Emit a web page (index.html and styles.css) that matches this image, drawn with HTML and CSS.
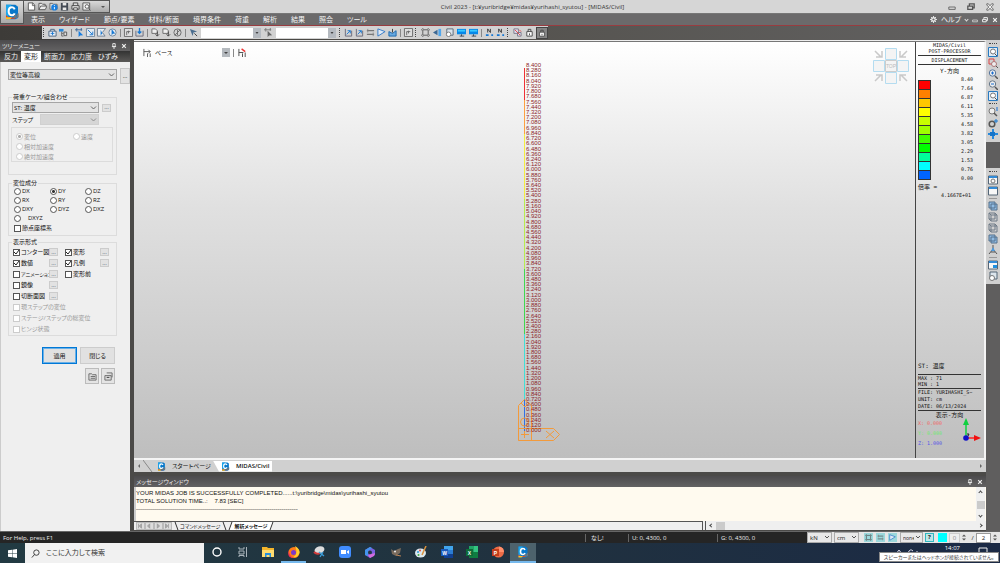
FILE: index.html
```html
<!DOCTYPE html>
<html lang="ja">
<head>
<meta charset="utf-8">
<title>Civil 2023</title>
<link rel="stylesheet" href="styles.css">
</head>
<body>
<svg class="defs" aria-hidden="true">
  <symbol id="new" viewBox="0 0 10 10"><path d="M1.500 1h5l2 2.500V9h-7z" fill="#fff" stroke="#555"/><path d="M6 1v3h3" fill="none" stroke="#666"/></symbol>
  <symbol id="open" viewBox="0 0 10 10"><path d="M1 8.500v-7h3l1 1h3v2M1 8.500l2-4h7l-2 4z" fill="#ececec" stroke="#555"/></symbol>
  <symbol id="info" viewBox="0 0 10 10"><path d="M1 8V1.500h3l1 1h4V8z" fill="#ddd" stroke="#666"/><circle cx="6" cy="6" r="3.500" fill="#187fe0"/><path d="M6 5.500V8M6 3.500v1" stroke="#fff"/></symbol>
  <symbol id="save" viewBox="0 0 10 10"><path d="M1 1h8v8.500H1z" fill="#444b55"/><path d="M3 1h4v3H3zM3 6h4v3H3z" fill="#e8e8e8"/></symbol>
  <symbol id="print" viewBox="0 0 10 10"><path d="M2.500 4V1h5v3M1 4h8v4H1z" fill="#ddd" stroke="#444"/><path d="M3 6.500h4V9H3z" fill="#fff" stroke="#444"/></symbol>
  <symbol id="preview" viewBox="0 0 10 10"><path d="M1 1h7.500v8H1z" fill="#eee" stroke="#555"/><circle cx="5.500" cy="5" r="2" fill="#fff" stroke="#555"/><path d="M7 7l2.500 2.500" stroke="#555"/></symbol>
  <symbol id="logo" viewBox="0 0 24 24"><path d="M3 1h14l4 3v17l-4 2H3z" fill="#0878ca"/><path d="M3 1h8L6 21H3z" fill="#1ca6ec"/><path d="M3 17q5 6 14 2v3H3z" fill="#e6401c"/><path d="M3 20h9l-3 3H3z" fill="#ffc31e"/><path d="M16 8q-1-3-4-3-5 0-5 6t5 6q3 0 4-3" fill="none" stroke="#fff" stroke-width="3"/><path d="M14 21l1-4 3-1 1 5zM19 21v-6l3-1v6z" fill="#6d777d"/></symbol>
  <symbol id="box" viewBox="0 0 10 10"><path d="M1 3.500h8V9H1zM3 3.500v-2h4v2" fill="#e8eef5" stroke="#49627d"/><path d="M3 6h4M5 4v4" stroke="#1778d2"/></symbol>
  <symbol id="tree" viewBox="0 0 10 10"><path d="M0 1h5v3H0z" fill="#2588de"/><path d="M3 4v5h2M3 6h2" fill="none" stroke="#666"/><path d="M5.500 4.500h3v4h-3z" fill="#ddd" stroke="#555"/></symbol>
  <symbol id="pick" viewBox="0 0 10 10"><path d="M0 2h8M2 0v4M7 0v3" stroke="#3b6594"/><path d="M4 3v7l1.700-1.700L9 8z" fill="#187ee0"/></symbol>
  <symbol id="pickgray" viewBox="0 0 10 10"><path d="M0 2h8M2 0v4M7 0v3" stroke="#777"/><path d="M4 3v7l1.700-1.700L9 8z" fill="#666"/></symbol>
  <symbol id="frame" viewBox="0 0 10 10"><path d="M.5.5h9v9h-9z" fill="#e2eaf1" stroke="#6f859b"/><path d="M2 2l5 5M7.500 4v3.500H4" fill="none" stroke="#1474d0"/></symbol>
  <symbol id="poly" viewBox="0 0 10 10"><path d="M.5.500h9L6 5l3 4H.5z" fill="#e8edf2" stroke="#6a7c90"/><path d="M4 2v6l2-2z" fill="#1778d2"/></symbol>
  <symbol id="circ" viewBox="0 0 10 10"><circle cx="5" cy="5" r="4" fill="#e8edf2" stroke="#6a829b"/><path d="M4 1v7l1.500-1.500L8 6z" fill="#1778d2"/></symbol>
  <symbol id="sq" viewBox="0 0 10 10"><path d="M.5.500h9v9h-9z" fill="#ddd" stroke="#666"/><path d="M3 8V4h4M5 6V3" fill="none" stroke="#666"/></symbol>
  <symbol id="down" viewBox="0 0 10 10"><path d="M1 3v6h8V3" fill="none" stroke="#667"/><path d="M5 0v6M3 4l2 2 2-2" fill="none" stroke="#1778d2" stroke-width="1.500"/></symbol>
  <symbol id="shape" viewBox="0 0 10 10"><path d="M1 1h4l2 2v3H1z" fill="#eee" stroke="#666"/><path d="M7 4v5M5 7l2 2 2-2" fill="none" stroke="#444"/></symbol>
  <symbol id="no" viewBox="0 0 10 10"><circle cx="5" cy="5" r="4" fill="none" stroke="#666"/><path d="M2 8l6-6M5 2v6" stroke="#666"/></symbol>
  <symbol id="arrow" viewBox="0 0 10 10"><path d="M1 1l3 8 1-4 4-1z" fill="#4b6d8e"/><path d="M6 6l3 3" stroke="#333"/></symbol>
  <symbol id="dim" viewBox="0 0 10 10"><path d="M1 1v8M1 4h7M6 2l2 2-2 2M5 6v4M8 6v4" fill="none" stroke="#555"/></symbol>
  <symbol id="dimred" viewBox="0 0 10 10"><path d="M1 1v8M1 5h5M5 6v4M8 5v5" fill="none" stroke="#444"/><path d="M4 1l4 3" stroke="#e33" stroke-width="1.500"/></symbol>
  <symbol id="node" viewBox="0 0 10 10"><path d="M1.500 1v8h7V3" fill="none" stroke="#667"/><path d="M3 7l4-4M4 3h3v3" fill="none" stroke="#1778d2"/></symbol>
  <symbol id="beam" viewBox="0 0 10 10"><path d="M1 3h8M1 7h8" stroke="#555"/><path d="M2 1v4M8 5v4" stroke="#888"/></symbol>
  <symbol id="tri" viewBox="0 0 10 10"><path d="M1 1v8l8-5z" fill="#e0eaf5" stroke="#2e76c6"/></symbol>
  <symbol id="solid" viewBox="0 0 10 10"><path d="M1 4l4 2 4-3v6H1z" fill="#69a9df" stroke="#1765ab"/><path d="M5 1v4" stroke="#333"/></symbol>
  <symbol id="fit" viewBox="0 0 10 10"><path d="M2 2h6v6H2zM0 2h1M9 2h1M0 8h1M9 8h1M2 0v1M8 0v1M2 9v1M8 9v1" fill="none" stroke="#555"/></symbol>
  <symbol id="left" viewBox="0 0 10 10"><path d="M0 5l5-3v6z" fill="#3c6894"/><path d="M6 1h3v8H6z" fill="#51a7ec"/></symbol>
  <symbol id="copy" viewBox="0 0 10 10"><path d="M2 1h7v7H2z" fill="#dce5ec" stroke="#567"/><circle cx="4" cy="7" r="2.500" fill="#fff" stroke="#777"/></symbol>
  <symbol id="screen" viewBox="0 0 10 10"><path d="M0 1h10v6H0z" fill="#0788e8"/><path d="M1 2h8v2H1z" fill="#36c8ff"/><path d="M3 9h5M5 7v2" stroke="#345"/></symbol>
  <symbol id="nn" viewBox="0 0 10 10"><path d="M3 5V1l3 4V1" fill="none" stroke="#333"/><path d="M1 8h3M7 8h2" stroke="#1477d3" stroke-width="2"/></symbol>
  <symbol id="lock" viewBox="0 0 10 10"><path d="M2 4h6v5H2z" fill="#fff" stroke="#444"/><path d="M3.500 4V1.500h3V4M5 6v2" fill="none" stroke="#444"/></symbol>
  <symbol id="swap" viewBox="0 0 10 10"><path d="M1 1h5v5H1zM5 5h4v4H5z" fill="#dde" stroke="#778"/><path d="M2 2l6 6M7 2l2 2" stroke="#e34343"/></symbol>
  <symbol id="zfit" viewBox="0 0 10 10"><path d="M.5.500h9v9h-9z" fill="#e1edf7" stroke="#287ac1"/><circle cx="5" cy="4.500" r="2.500" fill="#fff" stroke="#777"/><path d="M7 7l2 2" stroke="#555"/></symbol>
  <symbol id="zwin" viewBox="0 0 10 10"><path d="M1 1h5v5H1z" fill="none" stroke="#d44"/><circle cx="6" cy="6" r="2.500" fill="#eee" stroke="#a77"/><path d="M8 8l2 2" stroke="#555"/></symbol>
  <symbol id="zin" viewBox="0 0 10 10"><circle cx="4.500" cy="4" r="3.200" fill="#eee" stroke="#58759a"/><path d="M7 7l3 3" stroke="#555" stroke-width="1.500"/><path d="M3 4h3M4.500 2.500v3" stroke="#176cd0"/></symbol>
  <symbol id="zout" viewBox="0 0 10 10"><circle cx="4.500" cy="4" r="3.200" fill="#eee" stroke="#678"/><path d="M7 7l3 3" stroke="#555" stroke-width="1.500"/><path d="M3 4h3" stroke="#176cd0"/></symbol>
  <symbol id="zdyn" viewBox="0 0 10 10"><circle cx="4" cy="4" r="3" fill="#eee" stroke="#777"/><path d="M6 6l3 3" stroke="#555" stroke-width="1.500"/><path d="M8 1h2M8 3h2" stroke="#176cd0"/></symbol>
  <symbol id="rot" viewBox="0 0 10 10"><circle cx="4" cy="6" r="2.800" fill="none" stroke="#555" stroke-width="1.500"/><path d="M6 3h4M8 1v4" stroke="#1778d2"/></symbol>
  <symbol id="pan" viewBox="0 0 10 10"><path d="M5 0v10M0 5h10" stroke="#2588dc" stroke-width="2"/><path d="M2 3h5v4H2z" fill="#1574c9"/></symbol>
  <symbol id="win" viewBox="0 0 10 10"><path d="M.5 1h9v8h-9z" fill="#f7f7f7" stroke="#567"/><path d="M1 2h8" stroke="#328bd8" stroke-width="2"/></symbol>
  <symbol id="wing" viewBox="0 0 10 10"><path d="M.5 1h9v8h-9z" fill="#f7f7f7" stroke="#567"/><path d="M1 2h8" stroke="#328bd8" stroke-width="2"/><circle cx="5" cy="6" r="2" fill="none" stroke="#777"/></symbol>
  <symbol id="winb" viewBox="0 0 10 10"><path d="M.5 1h9v8h-9z" fill="#f7f7f7" stroke="#567"/><path d="M1 2h8" stroke="#328bd8" stroke-width="2"/><path d="M5 5h4v3H5z" fill="#1f8fe0"/></symbol>
  <symbol id="cube" viewBox="0 0 10 10"><path d="M1 1h6v6H1zM3 3h6v6H3z" fill="#8fbbe3" stroke="#55708c"/></symbol>
  <symbol id="cubew" viewBox="0 0 10 10"><path d="M1 1h6v6H1zM3 3h6v6H3zM1 1l2 2M7 1l2 2M1 7l2 2" fill="none" stroke="#6e7a87"/></symbol>
  <symbol id="persp" viewBox="0 0 10 10"><path d="M5 0v4L1 9M5 4l4 5M3 7h4" fill="none" stroke="#555"/><path d="M5 2L3 6h4z" fill="#4c9ae0"/></symbol>
  <symbol id="gear" viewBox="0 0 10 10"><circle cx="5" cy="5" r="2.500" fill="none" stroke="#eee" stroke-width="1.800"/><path d="M5 0v2M5 8v2M0 5h2M8 5h2M1.500 1.500L3 3M7 7l1.500 1.500M8.500 1.500L7 3M3 7L1.500 8.500" stroke="#eee" stroke-width="1.300"/></symbol>
  <symbol id="min" viewBox="0 0 10 10"><path d="M1 5h8v3H1z" fill="none" stroke="currentColor"/></symbol>
  <symbol id="restore" viewBox="0 0 10 10"><path d="M3 3V1h6v5H7M1 4h6v4H1z" fill="none" stroke="currentColor" stroke-width="1.600"/></symbol>
  <symbol id="x" viewBox="0 0 10 10"><path d="M2 2l6 6M8 2L2 8" stroke="currentColor" stroke-width="2"/></symbol>
  <symbol id="xbox" viewBox="0 0 10 10"><path d="M1 1h2l2 2.500L7 1h2v1.500L6.500 5 9 7.500V9H7L5 6.500 3 9H1V7.500L3.500 5 1 2.500z" fill="#eee" stroke="currentColor"/></symbol>
  <symbol id="pin" viewBox="0 0 10 10"><path d="M3 1h4v5H3zM1.500 6h7M5 6v4" fill="none" stroke="currentColor" stroke-width="1.500"/></symbol>
  <symbol id="doc" viewBox="0 0 10 10"><path d="M1 2h3l1 1h4v6H1zM3 5h5M3 7h5" fill="#ddd" stroke="#666"/></symbol>
  <symbol id="stack" viewBox="0 0 10 10"><path d="M3 1h6v5M1 4h7v5H1z" fill="#ddd" stroke="#666"/><path d="M3 6h3" stroke="#333"/></symbol>
</svg>

<header>
  <div class="titlebar">
    <div class="quick">
      <button aria-label="新規"><svg><use href="#new"/></svg></button>
      <button aria-label="開く"><svg><use href="#open"/></svg></button>
      <button aria-label="情報"><svg><use href="#info"/></svg></button>
      <button aria-label="保存"><svg><use href="#save"/></svg></button>
      <button aria-label="印刷"><svg><use href="#print"/></svg></button>
      <button aria-label="プレビュー"><svg><use href="#preview"/></svg></button>
      <span class="quick-more"></span>
    </div>
    <h1>Civil 2023 - [t:¥yuribridge¥midas¥yurihashi_syutou] - [MIDAS/Civil]</h1>
    <div class="window-buttons">
      <button aria-label="最小化"><svg><use href="#min"/></svg></button>
      <button aria-label="元に戻す"><svg><use href="#restore"/></svg></button>
      <button aria-label="閉じる"><svg><use href="#xbox"/></svg></button>
    </div>
    <button class="app-logo" aria-label="メイン"><svg><use href="#logo"/></svg></button>
  </div>
  <nav class="menubar">
    <button>表示</button><button>ウィザード</button><button>節点/要素</button><button>材料/断面</button><button>境界条件</button><button>荷重</button><button>解析</button><button>結果</button><button>照会</button><button>ツール</button>
    <div class="menu-right">
      <svg><use href="#gear"/></svg><button>ヘルプ</button><i class="chev"></i>
      <button class="mdi" aria-label="最小化"><svg><use href="#min"/></svg></button>
      <button class="mdi" aria-label="元に戻す"><svg><use href="#restore"/></svg></button>
      <button class="mdi" aria-label="閉じる"><svg><use href="#x"/></svg></button>
    </div>
  </nav>
  <div class="toolrow">
    <div class="toolbar">
      <i class="grip"></i>
      <svg><use href="#box"/></svg><svg><use href="#tree"/></svg><i class="sep"></i>
      <svg><use href="#pick"/></svg><svg><use href="#frame"/></svg><svg><use href="#poly"/></svg><svg><use href="#circ"/></svg><i class="sep"></i>
      <svg><use href="#sq"/></svg><svg><use href="#down"/></svg><i class="sep"></i>
      <svg><use href="#shape"/></svg><svg><use href="#shape"/></svg><svg><use href="#no"/></svg><i class="sep"></i>
      <svg><use href="#arrow"/></svg>
      <select class="bar-select" aria-label="節点選択"><option></option></select>
      <svg><use href="#pickgray"/></svg>
      <select class="bar-select" aria-label="要素選択"><option></option></select>
      <i class="grip"></i>
      <svg><use href="#node"/></svg><svg><use href="#node"/></svg><svg><use href="#beam"/></svg><svg><use href="#tri"/></svg><svg><use href="#solid"/></svg><i class="sep"></i><svg><use href="#sq"/></svg>
      <i class="grip"></i>
      <div class="tool-group"><svg><use href="#fit"/></svg><svg><use href="#left"/></svg><svg><use href="#copy"/></svg><svg><use href="#screen"/></svg><svg><use href="#screen"/></svg></div><i class="sep"></i>
      <svg><use href="#nn"/></svg><svg><use href="#nn"/></svg>
      <i class="grip"></i>
      <div class="tool-group"><svg><use href="#swap"/></svg><svg><use href="#lock"/></svg><svg class="pressed"><use href="#lock"/></svg></div>
    </div>
  </div>
</header>

<main>
  <aside class="tree">
    <div class="pane-head"><h2>ツリーメニュー</h2><svg><use href="#pin"/></svg><svg><use href="#x"/></svg></div>
    <div class="tree-tabs"><button>反力</button><button class="active">変形</button><button>断面力</button><button>応力度</button><button>ひずみ</button></div>
    <form class="tree-form">
      <div class="result-row">
        <select aria-label="結果"><option>変位等高線</option></select>
        <button type="button" class="more-tall">...</button>
      </div>
      <fieldset class="load">
        <legend>荷重ケース/組合わせ</legend>
        <div class="load-row"><select aria-label="荷重ケース"><option>ST: 温度</option></select><button type="button" class="dots">...</button></div>
        <div class="load-row step"><label for="step">ステップ</label><select id="step" disabled><option></option></select></div>
        <div class="kind">
          <label><input type="radio" name="kind" disabled checked>変位</label>
          <label><input type="radio" name="kind" disabled>速度</label>
          <label class="wide"><input type="radio" name="kind" disabled>相対加速度</label>
          <label class="wide"><input type="radio" name="kind" disabled>絶対加速度</label>
        </div>
      </fieldset>
      <fieldset class="comp">
        <legend>変位成分</legend>
        <div class="comp-grid">
          <label><input type="radio" name="c">DX</label><label><input type="radio" name="c" checked>DY</label><label><input type="radio" name="c">DZ</label>
          <label><input type="radio" name="c">RX</label><label><input type="radio" name="c">RY</label><label><input type="radio" name="c">RZ</label>
          <label><input type="radio" name="c">DXY</label><label><input type="radio" name="c">DYZ</label><label><input type="radio" name="c">DXZ</label>
          <label class="spaced"><input type="radio" name="c">DXYZ</label>
        </div>
        <label><input type="checkbox">節点座標系</label>
      </fieldset>
      <fieldset class="disp">
        <legend>表示形式</legend>
        <div class="disp-grid">
          <label><input type="checkbox" checked>コンター図</label><button type="button" class="dots">...</button><label><input type="checkbox" checked>変形</label><button type="button" class="dots">...</button>
          <label><input type="checkbox" checked>数値</label><button type="button" class="dots">...</button><label><input type="checkbox" checked>凡例</label><button type="button" class="dots">...</button>
          <label class="tight"><input type="checkbox">アニメーション</label><button type="button" class="dots">...</button><label class="to-end"><input type="checkbox">変形前</label>
          <label><input type="checkbox">鏡像</label><button type="button" class="dots row-last">...</button>
          <label><input type="checkbox">切断面図</label><button type="button" class="dots row-last">...</button>
          <label class="full"><input type="checkbox" disabled>現ステップの変位</label>
          <label class="full"><input type="checkbox" disabled>ステージ/ステップの総変位</label>
          <label class="full"><input type="checkbox" disabled>ヒンジ状態</label>
        </div>
      </fieldset>
      <div class="actions"><button type="button" class="push default">適用</button><button type="button" class="push">閉じる</button></div>
      <div class="actions small"><button type="button" class="tool" aria-label="読込"><svg><use href="#doc"/></svg></button><button type="button" class="tool" aria-label="保存"><svg><use href="#stack"/></svg></button></div>
    </form>
  </aside>

  <section class="work">
    <div class="view">
      <div class="view-body">
        <div class="canvas">
          <div class="view-tools"><svg><use href="#dim"/></svg><label for="base">ベース</label><button id="base" class="base-drop" aria-label="ベース"></button><i class="sep"></i><svg><use href="#dimred"/></svg></div>
          <svg class="model" viewBox="0 0 44 380">
            <path d="M6.500 6v32" stroke="#f03038"/><path d="M6.500 38v34" stroke="#ffa040"/><path d="M6.500 72v65" stroke="#f6ee40"/><path d="M6.500 137v70" stroke="#b8ee50"/><path d="M6.500 207v65" stroke="#40d850"/><path d="M6.500 272v65" stroke="#40e0d8"/><path d="M6.500 337v35" stroke="#3070e8"/>
            <g fill="none" stroke="#f29a3c"><path d="M.5 378.500V343.500l6-6 7 6v35M.5 366.500h35l6 6-6 6H.5zM28 369l8 7M36 369l-8 7M3 372.500h8M6.500 369v7M3 341l4 4 4-4"/><circle cx="6.500" cy="360" r="4"/></g>
          </svg>
          <div class="values" id="values"></div>
          <svg class="viewcube" viewBox="0 0 36 36">
            <g fill="#f4f4f4" stroke="#b4dcf0"><path d="M12.500.5h11v11h-11zM.5 12.500h11v11H.5zM24.500 12.500h11v11h-11zM12.500 24.500h11v11h-11z"/></g>
            <path d="M12.500 12.500h11v11h-11z" fill="#f4f4f4" stroke="#ccc"/>
            <g fill="none" stroke="#c9c9c9" stroke-width="1.500"><path d="M2 3l6 6M9 3v6H3M34 3l-6 6M27 3v6h6M2 33l6-6M3 27h6v6M34 33l-6-6M33 27h-6v6"/></g>
            <text x="18" y="20" text-anchor="middle">TOP</text>
          </svg>
        </div>
        <div class="legend">
          <div class="lg-title">MIDAS/Civil<br>POST-PROCESSOR</div>
          <div class="lg-kind">DISPLACEMENT</div>
          <div class="lg-dir">Y-方向</div>
          <div class="scale">
            <div class="bar"><i class="c1"></i><i class="c2"></i><i class="c3"></i><i class="c4"></i><i class="c5"></i><i class="c6"></i><i class="c7"></i><i class="c8"></i><i class="c9"></i><i class="c10"></i><i class="c11"></i></div>
            <div class="ticks"><span>8.40</span><span>7.64</span><span>6.87</span><span>6.11</span><span>5.35</span><span>4.58</span><span>3.82</span><span>3.05</span><span>2.29</span><span>1.53</span><span>0.76</span><span>0.00</span></div>
          </div>
          <div class="factor"><b>倍率 =</b><span>4.1667E+01</span></div>
          <div class="lg-bottom">
            <div class="lg-case">ST: 温度</div>
            <div class="lg-ext">MAX : 71<br>MIN : 1</div>
            <div class="lg-file">FILE: YURIHASHI_S~<br>UNIT: cm<br>DATE: 06/13/2024</div>
            <div class="lg-view">表示-方向</div>
            <div class="lg-axes">
              <div><span class="ax">X: 0.000</span><span class="ay">Y: 0.000</span><span class="az">Z: 1.000</span></div>
              <svg viewBox="0 0 20 26"><path d="M5 19V4" stroke="#10d040" stroke-width="1.500"/><path d="M2 7l3-7 3 7z" fill="#10d040"/><path d="M5 20h10" stroke="#f22" stroke-width="1.500"/><path d="M13 17l7 3-7 3z" fill="#f01010"/><circle cx="5" cy="20" r="2.800" fill="#1010c8"/><path d="M6 16h2l-1 2" fill="none" stroke="#222"/></svg>
            </div>
          </div>
        </div>
      </div>
      <div class="doc-tabs"><i class="tri-l"></i><svg class="slant" viewBox="0 0 10 12"><path d="M0 0l9 12" stroke="#888"/></svg><button class="doc-tab"><svg><use href="#logo"/></svg>スタートページ</button><button class="doc-tab current"><svg><use href="#logo"/></svg>MIDAS/Civil</button><i class="tri-r"></i></div>
    </div>
    <div class="messages">
      <div class="pane-head"><h2>メッセージウィンドウ</h2><svg><use href="#pin"/></svg><svg><use href="#x"/></svg></div>
      <div class="log">
        <div class="log-text"><p>YOUR MIDAS JOB IS SUCCESSFULLY COMPLETED......t:\yuribridge\midas\yurihashi_syutou</p><p>TOTAL SOLUTION TIME..: &nbsp;&nbsp; 7.83 [SEC]</p><p>---------------------------------------------------------------------------------</p></div>
        <div class="vscroll"><i class="up"></i><i class="thumb"></i><i class="dn"></i></div>
      </div>
      <div class="msg-tabs">
        <div class="msg-left">
          <button class="nav" aria-label="先頭"><svg viewBox="0 0 8 8"><path d="M2 1v6M6 1v6L3 4z"/></svg></button><button class="nav" aria-label="前"><svg viewBox="0 0 8 8"><path d="M5 1v6L2 4z"/></svg></button><button class="nav" aria-label="次"><svg viewBox="0 0 8 8"><path d="M3 1v6l3-3z"/></svg></button><button class="nav" aria-label="最後"><svg viewBox="0 0 8 8"><path d="M6 1v6M2 1v6l3-3z"/></svg></button>
          <button class="msg-tab">コマンドメッセージ</button><button class="msg-tab current">解析メッセージ</button>
        </div>
        <div class="hscroll"><i class="lf"></i><i class="thumb"></i><i class="rt"></i></div>
      </div>
    </div>
  </section>

  <aside class="side">
    <div class="vbar"><i class="hgrip"></i><svg><use href="#zfit"/></svg><svg><use href="#zwin"/></svg><svg><use href="#zin"/></svg><svg><use href="#zout"/></svg><svg><use href="#zfit"/></svg><i class="hgrip"></i><svg><use href="#zdyn"/></svg><svg><use href="#rot"/></svg><svg><use href="#pan"/></svg></div>
    <div class="vbar"><i class="hgrip"></i><svg><use href="#wing"/></svg><svg><use href="#win"/></svg><i class="hsep"></i><svg><use href="#cube"/></svg><svg><use href="#cubew"/></svg><svg><use href="#cubew"/></svg><svg><use href="#cube"/></svg><svg><use href="#persp"/></svg><i class="hsep"></i><svg><use href="#winb"/></svg><svg><use href="#copy"/></svg></div>
  </aside>
</main>

<footer class="status">
  <span class="help">For Help, press F1</span>
  <span class="cell none">なし!</span><span class="cell u">U: 0, 4300, 0</span><span class="cell g">G: 0, 4300, 0</span>
  <div class="units">
    <select aria-label="力"><option>kN</option></select><select aria-label="長さ"><option>cm</option></select>
    <span class="sbtns"><svg><use href="#fit"/></svg><svg><use href="#beam"/></svg><svg><use href="#tri"/></svg></span>
    <select class="nonsel" aria-label="フィルタ"><option>none</option></select>
    <button class="q">?</button><i class="cyan"></i>
    <input class="num off" aria-label="現在" value="0" disabled><i class="spin"></i><span class="slash">/</span><input class="num" aria-label="合計" value="2"><i class="spin"></i>
  </div>
</footer>

<div class="taskbar">
  <button class="start" aria-label="スタート"><svg viewBox="0 0 10 10"><path d="M0 1.500l4.500-.7v3.900H0zM5 .7L10 0v4.700H5zM0 5.200h4.500v4L0 8.500zM5 5.200h5V10l-5-.8z" fill="#fff"/></svg></button>
  <label class="search"><svg viewBox="0 0 10 10"><circle cx="6" cy="4" r="3" fill="none" stroke="#333"/><path d="M4 6L1 9.500" stroke="#333"/></svg><input aria-label="検索" placeholder="ここに入力して検索"></label>
  <div class="apps">
    <button aria-label="Cortana"><svg viewBox="0 0 12 12"><circle cx="6" cy="6" r="4" fill="none" stroke="#fff" stroke-width="1.400"/></svg></button>
    <button aria-label="タスクビュー"><svg viewBox="0 0 12 12"><path d="M2 1v2h5V1M2 5h5v3H2zM2 11V9.500h5V11M9.500 1v10" fill="none" stroke="#aab4bb"/></svg></button>
    <button aria-label="エクスプローラー"><svg viewBox="0 0 12 12"><path d="M0 1h5l1 1h6v9H0z" fill="#f4b52c"/><path d="M0 4h12v7H0z" fill="#ffdc71"/><path d="M3 7h6v4H7.500V9h-3v2H3z" fill="#268fdd"/></svg></button>
    <button class="open" aria-label="Firefox"><svg viewBox="0 0 12 12"><circle cx="6" cy="6.500" r="5.500" fill="#ff7b18"/><path d="M7 0q5 3 4.500 7-2 5-6 4 5-3 1.500-11z" fill="#ffce2e"/><circle cx="5.500" cy="6.500" r="2.500" fill="#7b39c8"/><path d="M.8 4q0 6 5 8-6 0-5.500-5z" fill="#f22e55"/></svg></button>
    <button aria-label="Snipping Tool"><svg viewBox="0 0 12 12"><ellipse cx="6.500" cy="4" rx="5" ry="3.500" fill="#ddd" transform="rotate(-15 6 4)"/><path d="M1 6q3 3 6 1" stroke="#d33b3b" stroke-width="2" fill="none"/><path d="M6 6l5 4M10 6L7 11" stroke="#3ba0dd" stroke-width="1.300"/></svg></button>
    <button aria-label="Zoom"><svg viewBox="0 0 12 12"><rect width="12" height="12" rx="3" fill="#408cff"/><path d="M2 4h5v4H2zM8 5.500L10 4v4L8 6.500z" fill="#fff"/></svg></button>
    <button aria-label="Loop"><svg viewBox="0 0 12 12"><path d="M6 1L1 4v5l5 3 5-3V4z" fill="#7861dd"/><path d="M6 1L1 4v5l3 1V5l4-3z" fill="#4395ed"/><circle cx="6" cy="6.500" r="2" fill="#213845"/><path d="M4 9l7-2-1 3-4 2z" fill="#d56bdc"/></svg></button>
    <button aria-label="GIMP"><svg viewBox="0 0 12 12"><path d="M1 3l3 2 4-2 3-1-1 5-4 3-4-2z" fill="#786a5c"/><circle cx="5" cy="5.500" r="1" fill="#eee"/><path d="M6 9l5 1" stroke="#bf8555"/></svg></button>
    <button aria-label="ペイント"><svg viewBox="0 0 12 12"><ellipse cx="5.500" cy="7" rx="5.500" ry="4.500" fill="#dce8ee"/><circle cx="3" cy="6" r="1" fill="#2f9bdd"/><circle cx="5" cy="4.500" r="1" fill="#e34b3f"/><circle cx="3.500" cy="9" r="1" fill="#44aa44"/><path d="M11 0L7 9" stroke="#d9923f" stroke-width="1.500"/></svg></button>
    <button aria-label="Word"><svg viewBox="0 0 12 12"><path d="M3 0h9v12H3z" fill="#2b7cd3"/><path d="M3 0h9v4H3z" fill="#41a5ee"/><path d="M3 8h9v4H3z" fill="#103f91"/><path d="M0 3h7v7H0z" fill="#185abd"/><text x="3.500" y="8.500" text-anchor="middle">W</text></svg></button>
    <button aria-label="Excel"><svg viewBox="0 0 12 12"><path d="M3 0h9v12H3z" fill="#21a366"/><path d="M8 0h4v6H8z" fill="#33c481"/><path d="M3 6h9v6H3z" fill="#107c41"/><path d="M0 3h7v7H0z" fill="#0e6c38"/><text x="3.500" y="8.500" text-anchor="middle">X</text></svg></button>
    <button aria-label="PowerPoint"><svg viewBox="0 0 12 12"><circle cx="6.500" cy="6" r="5.500" fill="#ed6c47"/><path d="M7 .5A5.500 5.500 0 0 1 12 6H7z" fill="#ff8f6b"/><path d="M0 3h7v7H0z" fill="#c43e1c"/><text x="3.500" y="8.500" text-anchor="middle">P</text></svg></button>
    <button class="open front" aria-label="Civil"><svg><use href="#logo"/></svg></button>
  </div>
  <div class="tray">
    <svg viewBox="0 0 34 8"><path d="M3 7l3-4 3 4M15 6q2-5 5-2M17 8V5M24 4v4" fill="none" stroke="#dde"/></svg>
    <time>14:07</time>
    <svg class="note" viewBox="0 0 10 10"><path d="M1 1h8v7H6L5 10V8H1z" fill="none" stroke="#eee"/></svg>
  </div>
  <div class="tip" role="tooltip">スピーカーまたはヘッドホンが接続されていません。</div>
</div>
<script src="script.js"></script>
</body>
</html>
```
FILE: styles.css
```css
* { box-sizing: border-box; }
body {
  margin: 0; height: 100vh; display: flex; flex-direction: column; overflow: hidden;
  font: 6px/8px "Open Sans", "Noto Sans CJK JP", sans-serif;
  font-feature-settings: "palt"; color: #111; background: #5d5c5c;
}
button, select, input { font: inherit; font-feature-settings: inherit; color: inherit; margin: 0; padding: 0; border: 0; background: none; border-radius: 0; appearance: none; }
h1, h2, p { margin: 0; font: inherit; }
svg { display: block; flex: none; width: 9px; height: 9px; }
i { display: block; flex: none; }
.defs { position: absolute; width: 0; height: 0; }

/* title, menu and tool rows */
.titlebar { position: relative; display: flex; align-items: center; justify-content: space-between; height: 14px; background: #d6d6d6; border-bottom: 1px solid #777; }
.titlebar h1 { position: absolute; left: 0; right: 0; text-align: center; padding-left: 65px; color: #333; pointer-events: none; }
.quick { display: flex; align-items: center; gap: 2px; height: 13px; margin-left: 23px; padding: 0 4px; border: 1px solid #555; border-left: 0; background: linear-gradient(#d9d9d9, #aaa); }
.quick button { width: 9px; }
.quick-more { width: 4px; margin-left: 8px; border: 2px solid transparent; border-top-color: #555; border-bottom: 0; }
.window-buttons { display: flex; gap: 11px; padding-right: 6px; color: #555; }
.window-buttons svg { width: 8px; height: 8px; }
.app-logo { position: absolute; left: 0; top: 0; z-index: 2; width: 24px; height: 24px; padding: 2px 3px; border: 1px solid #555; background: linear-gradient(#ddd, #aaa); }
.app-logo svg { width: 16px; height: 18px; }
.menubar { display: flex; align-items: center; gap: 14px; height: 12px; padding-left: 31px; background: #6b6a6b; border-bottom: 1px solid #983c40; color: #f4f4f4; font-size: 7px; }
.menu-right { display: flex; align-items: center; gap: 4px; margin-left: auto; padding-right: 2px; }
.menu-right svg { width: 7px; height: 7px; }
.mdi { width: 6px; }
.menu-right .mdi svg { width: 6px; height: 6px; }
.chev { width: 3px; height: 3px; border: solid #ddd; border-width: 0 1px 1px 0; transform: rotate(45deg); }
.toolrow { height: 14px; padding-left: 42px; background: linear-gradient(90deg, #3d3b38, #55534f 50%, #626161); }
.toolbar { display: flex; align-items: center; width: max-content; height: 13px; background: #d2d2d2; }
.toolbar svg { width: 11px; height: 9px; }
.grip { width: 2px; height: 9px; margin: 0 2px 0 1px; border-left: 1px dotted #444; }
.sep { width: 1px; height: 8px; margin: 0 2px; background: #888; }
.bar-select { width: 60px; height: 10px; margin: 0 2px; background: #fff url("data:image/svg+xml,%3Csvg xmlns='http://www.w3.org/2000/svg' width='8' height='10'%3E%3Cpath d='M0 0h8v10H0z' fill='%23b5bac0'/%3E%3Cpath d='M2.500 4h3L4 6z' fill='%23444'/%3E%3C/svg%3E") no-repeat right; }
.tool-group { display: flex; align-items: center; gap: 1px; margin-left: 1px; }
.toolbar .pressed { width: 12px; height: 12px; padding: 1px; background: #858585; border: 1px solid #444; }

main { flex: 1; display: flex; min-height: 0; }
.pane-head { display: flex; align-items: center; gap: 4px; height: 11px; padding: 0 3px 0 2px; color: #eee; background: linear-gradient(#4c4b4d, #636263); }
.pane-head h2 { flex: 1; }
.pane-head svg { width: 6px; height: 6px; }

/* tree menu */
.tree { display: flex; flex-direction: column; width: 134px; flex: none; background: #efefef; border-right: 4px solid #4b4a48; }
.tree-tabs { display: flex; height: 11px; padding-left: 1px; background: linear-gradient(#333, #5b5a58); color: #f0f0f0; font-size: 7px; }
.tree-tabs button { padding: 0 3px; white-space: nowrap; }
.tree-tabs .active { background: #fff; color: #111; }
.tree-form { flex: 1; padding: 6px 0 0 7px; border-left: 1px solid #ccc; }
.tree select { height: 11px; padding: 0 10px 0 1px; border: 1px solid #a5a5a5; background: #e3e3e3 url("data:image/svg+xml,%3Csvg xmlns='http://www.w3.org/2000/svg' width='8' height='6'%3E%3Cpath d='M1 1.500l2.500 2.500L6 1.500' fill='none' stroke='%23666'/%3E%3C/svg%3E") no-repeat right center; }
.tree select:disabled { background-color: #ccc; border-color: #c4c4c4; }
.result-row { display: flex; justify-content: space-between; height: 25px; }
.result-row select { width: 109px; margin-top: 1px; }
.more-tall { width: 10px; height: 16px; border: 1px solid #c6c6c6; background: #e3e3e3; }
fieldset { min-width: 0; width: 109px; margin: 0; padding: 0 3px; border: 1px solid #dcdcdc; }
legend { padding: 0 1px; height: 8px; }
.load { height: 82px; }
.load-row { display: flex; align-items: center; gap: 3px; margin-top: 1px; }
.load-row select { width: 87px; }
.dots { width: 9px; height: 8px; line-height: 5px; border: 1px solid #ccc; background: #e2e2e2; color: #456; }
.step { justify-content: space-between; width: 87px; }
.load .step select { width: 59px; }
.kind { display: grid; grid-template-columns: 57px 1fr; row-gap: 1px; height: 35px; margin: 2px 0 0 -1px; padding: 4px 3px 0 4px; border: 1px solid #dcdcdc; color: #999; }
.kind .wide { grid-column: 1 / 3; }
.tree label { display: flex; align-items: center; gap: 1px; white-space: nowrap; }
.tree input { flex: none; width: 7px; height: 7px; border: 1px solid #555; background: #fff; }
.tree input[type=radio] { border-radius: 50%; }
.tree input[type=radio]:checked { background: radial-gradient(circle, #333 0 1px, #fff 2px); }
.tree input[type=checkbox]:checked { background: url("data:image/svg+xml,%3Csvg xmlns='http://www.w3.org/2000/svg' width='5' height='5'%3E%3Cpath d='M0 2l2 2L5 0' fill='none' stroke='%23222'/%3E%3C/svg%3E") #fff; }
.tree input:disabled { border-color: #ccc; }
.tree input[type=radio]:checked:disabled { background: radial-gradient(circle, #aaa 0 1px, #fff 2px); }
.comp { height: 57px; margin-top: 4px; }
.comp-grid { display: grid; grid-template-columns: 36px 35px 1fr; row-gap: 1px; margin-bottom: 2px; padding-left: 2px; }
.comp > label { padding-left: 2px; }
.comp .spaced { gap: 7px; }
.disp { height: 98px; margin-top: 2px; }
.disp-grid { display: grid; grid-template-columns: 36px 16px 35px 1fr; row-gap: 3px; padding: 2px 0 0 1px; }
.disp-grid .to-end { grid-column: 3 / 5; }
.disp-grid .row-last { grid-column: 2 / 5; }
.disp-grid .full { grid-column: 1 / 5; color: #999; }
.disp-grid .tight { font-size: 5px; }
.actions { display: flex; justify-content: flex-end; gap: 3px; padding-right: 15px; margin-top: 11px; }
.small { margin-top: 4px; gap: 2px; }
.push { width: 35px; height: 17px; border: 1px solid #ccc; background: #e1e1e1; }
.push.default { border: 1px solid #0078d7; outline: 1px solid #6ab0e6; outline-offset: -2px; }
.tool { display: grid; place-items: center; width: 14px; height: 16px; border: 1px solid #bbb; background: #e4e4e4; }

/* model view */
.work { flex: 1; min-width: 0; display: flex; flex-direction: column; padding-bottom: 1px; background: #4b4a48; }
.view { flex: 1; min-height: 0; display: flex; flex-direction: column; border-top: 1px solid #eee; }
.view-body { flex: 1; min-height: 0; display: flex; padding-left: 1px; border: solid #f4f4f4; border-width: 1px 2px 2px 0; border-top-color: #777; background: linear-gradient(#fff, #e0e0e0 40%, #bebebe); }
.canvas { position: relative; flex: 1; }
.view-tools { display: flex; align-items: center; padding: 6px 0 0 8px; gap: 3px; }
.view-tools label { width: 64px; }
.view-tools .sep { margin: 0 1px 0 0; }
.base-drop { width: 8px; height: 9px; background: #b4b9be; display: grid; place-items: center; }
.base-drop::after { content: ""; border: 2px solid transparent; border-top-color: #444; border-bottom: 0; }
.model { position: absolute; left: calc(50% - 7px); top: 20px; width: 44px; height: 380px; }
.values { position: absolute; left: calc(50% + 1px); top: 21px; height: 371px; display: flex; flex-direction: column; justify-content: space-between; font: 6px/5px "Liberation Sans", sans-serif; color: #8c1f2c; }
.viewcube { position: absolute; right: 6px; top: 6px; width: 36px; height: 36px; }
.viewcube text { font: 5px "Liberation Sans", sans-serif; fill: #bbb; }
.legend { display: flex; flex-direction: column; width: 69px; padding: 0 3px 0 2px; border-left: 1px solid #444; font: 5px/7px "DejaVu Sans Mono", "Noto Sans CJK JP", monospace; }
.lg-title { text-align: center; line-height: 6px; border-bottom: 1px solid #333; padding-bottom: 1px; }
.lg-kind { text-align: center; line-height: 8px; border-bottom: 1px solid #333; }
.lg-dir { text-align: center; padding-top: 2px; font-size: 6px; }
.scale { display: flex; justify-content: space-between; padding-right: 8px; }
.bar { width: 13px; height: max-content; margin-top: 6px; border: 1px solid #333; border-width: 1px 1px 0; }
.bar i { height: 9px; border-bottom: 1px solid #333; }
.c1 { background: #f00; } .c2 { background: #ff8000; } .c3 { background: #ffc800; } .c4 { background: #ff0; } .c5 { background: #c8ff00; } .c6 { background: #a0ff00; } .c7 { background: #40ff00; } .c8 { background: #0f0; } .c9 { background: #00ff9a; } .c10 { background: #0ff; } .c11 { background: #0064ff; }
.ticks { padding-top: 1px; }
.ticks span { display: block; line-height: 9px; }
.factor { line-height: 8px; }
.factor b { font-weight: 400; font-size: 6px; }
.factor span { display: block; text-align: right; padding-right: 10px; }
.lg-bottom { margin-top: auto; padding-bottom: 10px; }
.lg-case { border-bottom: 1px solid #333; line-height: 12px; height: 15px; font-size: 6px; }
.lg-ext { line-height: 6px; border-bottom: 1px solid #333; padding-bottom: 1px; white-space: nowrap; }
.lg-file { border-bottom: 1px solid #333; white-space: nowrap; }
.lg-view { text-align: center; font-size: 6px; }
.lg-axes { display: flex; justify-content: space-between; height: 30px; }
.lg-axes span { display: block; line-height: 10px; }
.lg-axes svg { width: 20px; height: 26px; }
.ax { color: #f06868; } .ay { color: #6ee870; } .az { color: #5555e8; }
.doc-tabs { display: flex; align-items: center; height: 12px; padding: 0 4px; background: #d0d0d0; }
.doc-tabs .slant { width: 10px; height: 12px; margin-left: 3px; }
.doc-tab { display: flex; align-items: center; gap: 6px; height: 11px; padding: 0 2px 0 4px; }
.doc-tab svg { width: 9px; height: 9px; }
.doc-tab.current { padding: 0 3px 0 8px; background: #fff; font-weight: 600; clip-path: polygon(0 0, 100% 0, 100% 100%, 6px 100%); }
.tri-l { border: 2px solid transparent; border-right-color: #666; border-left: 0; }
.tri-r { margin-left: auto; border: 2px solid transparent; border-left-color: #666; border-right: 0; }

/* message window */
.messages { margin-top: 4px; background: #eee; }
.log { display: flex; height: 34px; background: #fffaef; border-left: 2px solid #ccc; }
.log-text { flex: 1; font: 6px/8px "Liberation Sans", sans-serif; padding-top: 2px; }
.vscroll { display: flex; flex-direction: column; align-items: center; width: 9px; margin-right: 1px; padding: 4px 0; background: #f0f0f0; }
.thumb { background: #cbcbcb; }
.vscroll .thumb { width: 8px; height: 8px; margin: 7px 0 5px; }
.up, .dn, .lf, .rt { width: 3px; height: 3px; border: solid #444; border-width: 1px 0 0 1px; transform: rotate(45deg); }
.dn { transform: rotate(225deg); } .lf { transform: rotate(-45deg); } .rt { transform: rotate(135deg); margin-left: auto; }
.msg-tabs { display: flex; height: 9px; background: #efefef; }
.msg-left { display: flex; flex: 0 1 569px; padding-left: 2px; border: solid #555; border-width: 1px 1px 0 0; }
.nav { width: 9px; border: 1px solid #bbb; background: #ddd; }
.nav svg { width: 6px; height: 6px; fill: #aaa; stroke: #999; stroke-width: 1; }
.msg-tab { position: relative; isolation: isolate; padding: 0 6px; margin-left: 2px; font-size: 5px; line-height: 7px; }
.msg-tab::before { content: ""; position: absolute; z-index: -1; inset: 0 1px 0 2px; border: solid #333; border-width: 0 1px; background: #eee; transform: skewX(20deg); }
.msg-tab.current { font-weight: 700; }
.msg-tab.current::before { background: #fff; transform: skewX(-20deg); }
.hscroll { display: flex; align-items: center; flex: 1; margin-left: 2px; padding: 0 4px; border-left: 1px solid #555; }
.hscroll .thumb { width: 9px; height: 8px; margin-left: 3px; }

.side { width: 14px; flex: none; display: flex; flex-direction: column; gap: 26px; background: #5f5e5e; }
.vbar { display: flex; flex-direction: column; align-items: center; gap: 1px; padding: 2px 0 3px; background: #d0d0d0; }
.vbar svg { width: 10px; height: 10px; }
.hgrip { width: 8px; height: 2px; margin: 1px 0; border-top: 1px dotted #444; }
.hsep { width: 8px; height: 1px; margin: 1px 0; background: #999; }

/* status */
.status { display: flex; align-items: center; height: 12px; color: #eee; background: #252525; border-top: 1px solid #666; }
.help { flex: 1; padding-left: 3px; }
.cell { border-left: 1px solid #666; padding-left: 3px; }
.none { width: 43px; padding-left: 5px; } .u { width: 89px; } .g { width: 90px; }
.units { display: flex; align-items: center; height: 11px; background: #e6e6e6; color: #222; }
.units select { width: 25px; height: 11px; margin-right: 2px; padding: 0 8px 0 2px; border: 1px solid #aaa; background: #e8e8e8 url("data:image/svg+xml,%3Csvg xmlns='http://www.w3.org/2000/svg' width='7' height='5'%3E%3Cpath d='M1 1l2 2 2-2' fill='none' stroke='%23555'/%3E%3C/svg%3E") no-repeat right center; }
.sbtns { display: flex; gap: 3px; margin: 0 3px; }
.sbtns svg { padding: 1px; background: #9cd8dc; }
.units .nonsel { width: 23px; font-size: 5px; }
.q { width: 9px; height: 9px; border: 1px solid #30b8c0; background: #bee6e8; line-height: 7px; font-weight: 700; }
.cyan { width: 9px; height: 9px; margin: 0 2px 0 4px; background: #0ff; }
.num { width: 15px; height: 10px; text-align: center; background: #fff; border: 1px solid #999; }
.num.off { background: #eee; color: #888; border-color: #ccc; width: 11px; }
.spin { width: 9px; height: 9px; background: url("data:image/svg+xml,%3Csvg xmlns='http://www.w3.org/2000/svg' width='9' height='9'%3E%3Cpath d='M2 3.500l2-2 2 2zM2 5.500l2 2 2-2z' fill='%23555'/%3E%3C/svg%3E") no-repeat; }
.slash { width: 7px; text-align: center; }

/* taskbar */
.taskbar { position: relative; display: flex; height: 20px; background: linear-gradient(90deg, #223a42, #20313f 55%, #1b2a45); color: #fff; }
.start { width: 25px; display: grid; place-items: center; }
.search { display: flex; align-items: center; gap: 6px; width: 179px; padding-left: 6px; background: #f1f1f1; color: #333; font-size: 7px; }
.search input { flex: 1; min-width: 0; }
.search input::placeholder { color: #333; opacity: 1; }
.apps { display: flex; }
.apps button { display: grid; place-items: center; width: 25px; border-bottom: 2px solid transparent; }
.apps button:nth-child(odd) { width: 26px; }
.apps svg { width: 12px; height: 12px; }
.apps text { font: 700 5px "Liberation Sans", sans-serif; fill: #fff; }
.apps .open { border-bottom-color: #76b9ed; }
.apps .front { background: #4d626c; }
.tray { display: flex; align-items: flex-start; margin-left: auto; padding: 1px 12px 0 0; gap: 18px; }
.tray svg { width: 34px; height: 8px; margin-top: 3px; }
.tray .note { width: 10px; height: 10px; }
.tip { position: absolute; right: 1px; bottom: 1px; padding: 0 4px; background: #fff; border: 1px solid #888; color: #444; font-size: 5px; line-height: 8px; white-space: nowrap; }
```
FILE: script.js
```js
// Nodal displacement labels, top node first.
const column = document.getElementById("values");
for (let node = 70; node >= 0; node--) {
  const label = document.createElement("span");
  label.textContent = (node * 0.12).toFixed(3);
  column.append(label);
}
```
